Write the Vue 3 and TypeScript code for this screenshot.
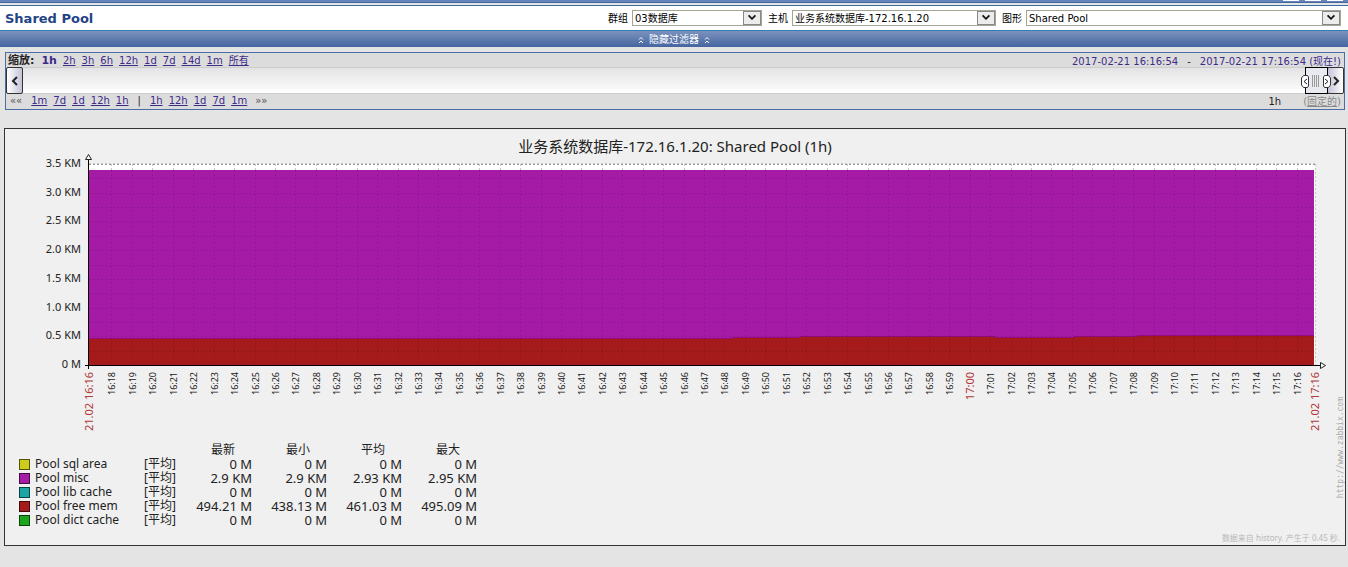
<script setup lang="ts">
interface LegendRow {
  name: string
  color: string
  values: string[]
}

const zooms: string[] = ['2h', '3h', '6h', '12h', '1d', '7d', '14d', '1m', '所有']
const back: string[] = ['1m', '7d', '1d', '12h', '1h']
const forward: string[] = ['1h', '12h', '1d', '7d', '1m']
const headers: string[] = ['最新', '最小', '平均', '最大']
const legend: LegendRow[] = [
  { name: 'Pool sql area', color: '#cccc1a', values: ['0 M', '0 M', '0 M', '0 M'] },
  { name: 'Pool misc', color: '#a51ba5', values: ['2.9 KM', '2.9 KM', '2.93 KM', '2.95 KM'] },
  { name: 'Pool lib cache', color: '#1ba5a5', values: ['0 M', '0 M', '0 M', '0 M'] },
  { name: 'Pool free mem', color: '#a51b1b', values: ['494.21 M', '438.13 M', '461.03 M', '495.09 M'] },
  { name: 'Pool dict cache', color: '#1ba51b', values: ['0 M', '0 M', '0 M', '0 M'] },
]

const left = 89
const right = 1315
const bottom = 365
const top = 164
const minute = (right - left) / 60

const ticks = Array.from({ length: 59 }, (_, i) => {
  const m = 18 + i
  const hour = 16 + Math.floor(m / 60)
  return {
    x: Math.round(left + (m - 16.9) * minute),
    label: `${hour}:${String(m % 60).padStart(2, '0')}`,
    major: m % 60 === 0,
  }
})
const rows = Array.from({ length: 14 }, (_, i) => Math.round(bottom - ((i + 1) * (bottom - top)) / 14))
const scale = Array.from({ length: 8 }, (_, i) => ({
  y: Math.round(bottom - (i * (bottom - top)) / 7) + 3,
  label: i === 0 ? '0 M' : `${(i / 2).toFixed(1)} KM`,
}))
</script>

<template>
  <main class="page">
    <div class="topbar"><i></i><i></i><i></i></div>
    <header class="head">
      <h1>Shared Pool</h1>
      <form class="filters">
        <label for="group">群组</label>
        <span class="pick group"><select id="group"><option>03数据库</option></select><svg viewBox="0 0 18 14"><path d="M5 4l4 4 4-4" /></svg></span>
        <label for="host">主机</label>
        <span class="pick host"><select id="host"><option>业务系统数据库-172.16.1.20</option></select><svg viewBox="0 0 18 14"><path d="M5 4l4 4 4-4" /></svg></span>
        <label for="graph">图形</label>
        <span class="pick graph"><select id="graph"><option>Shared Pool</option></select><svg viewBox="0 0 18 14"><path d="M5 4l4 4 4-4" /></svg></span>
      </form>
    </header>
    <button class="toggle" type="button">
      <svg viewBox="0 0 6 8"><path d="M1 3.5l2-2 2 2M1 7l2-2 2 2" /></svg>
      <span>隐藏过滤器</span>
      <svg viewBox="0 0 6 8"><path d="M1 3.5l2-2 2 2M1 7l2-2 2 2" /></svg>
    </button>

    <section class="timeline">
      <div class="line upper">
        <div class="links">
          <b>缩放:</b>
          <a class="current" href="#">1h</a>
          <a v-for="z in zooms" :key="z" href="#">{{ z }}</a>
        </div>
        <div class="range">
          <a href="#">2017-02-21 16:16:54</a><span>-</span><a href="#">2017-02-21 17:16:54 (现在!)</a>
        </div>
      </div>
      <div class="track">
        <button class="arrow prev" type="button" aria-label="Back"><svg viewBox="0 0 8 10"><path d="M6 1L2 5l4 4" /></svg></button>
        <button class="arrow next" type="button" aria-label="Forward"><svg viewBox="0 0 8 10"><path d="M2 1l4 4-4 4" /></svg></button>
        <svg class="handle" viewBox="0 0 32 27">
          <rect class="grip" x="5.500" y="0.500" width="22" height="26" />
          <path class="ribs" d="M12.500 8v12M14.500 8v12M16.500 8v12M18.500 8v12" />
          <path class="knob" d="M3.500 8.500h4l1 1.500v9l-1 1.500h-4l-2-2.500v-7zM24.500 8.500h4l2 2.500v7l-2 2.500h-4l-1-1.500v-9z" />
          <path class="sign" d="M7 12l-3 2.500 3 2.500M25 12l3 2.500-3 2.500" />
        </svg>
      </div>
      <div class="line lower">
        <div class="links">
          <span class="jump">««</span>
          <a v-for="b in back" :key="b" href="#">{{ b }}</a>
          <span class="bar">|</span>
          <a v-for="f in forward" :key="f" href="#">{{ f }}</a>
          <span class="jump end">»»</span>
        </div>
        <div class="fixed"><span>1h</span><span class="mode">(<a href="#">固定的</a>)</span></div>
      </div>
    </section>

    <section class="chart">
      <h2>业务系统数据库-172.16.1.20: Shared Pool (1h)</h2>
      <svg class="plot" viewBox="5 153 1340 282" role="img" aria-label="Shared Pool">
        <rect x="89" y="164" width="1226" height="201" fill="#fff" />
        <g class="grid">
          <path v-for="t in ticks" :key="t.x" :d="`M${t.x + 0.5} 164V170`" />
          <path d="M89 163.500H1315M1315.500 164V365" />
          <path class="strong" d="M89 164.500H1315" />
        </g>
        <path fill="#a51ba5" d="M89 170H1314V336H89z" />
        <path fill="#a51b1b" d="M89 339H733V338H800V337H995V338H1074V337H1137V336H1314V365H89z" />
        <path fill="#a51ba5" d="M89 335H1137V336H1074V337H995V336H800V337H733V338H89z" />
        <path fill="none" stroke="#960a82" d="M89 338.500H733V337.500H800V336.500H995V337.500H1074V336.500H1137V335.500H1314" />
        <g class="shade">
          <path v-for="t in ticks" :key="t.x" :d="`M${t.x + 0.5} 170V365`" />
          <path v-for="y in rows.slice(0, 13)" :key="y" :d="`M89 ${y + 0.5}H1315`" />
        </g>
        <path class="axis" d="M88.500 159V369M85 365.500H1320" />
        <path class="tip" d="M85.500 159.500L88.500 154.500L91.500 159.500zM1320.500 362.500L1325.500 365.500L1320.500 368.500z" />
        <g class="scale">
          <text v-for="s in scale" :key="s.label" x="81" :y="s.y">{{ s.label }}</text>
        </g>
        <g class="times">
          <text v-for="t in ticks" :key="t.x" :class="{ major: t.major }" :transform="`translate(${t.x + 4} 372) rotate(-90)`">{{ t.label }}</text>
          <text class="major" transform="translate(93 372) rotate(-90)">21.02 16:16</text>
          <text class="major" transform="translate(1319 372) rotate(-90)">21.02 17:16</text>
        </g>
      </svg>
      <table class="legend">
        <thead>
          <tr><td></td><td></td><th v-for="h in headers" :key="h">{{ h }}</th></tr>
        </thead>
        <tbody>
          <tr v-for="r in legend" :key="r.name">
            <td class="name"><div><i :style="{ background: r.color }"></i>{{ r.name }}</div></td>
            <td class="kind">[平均]</td>
            <td v-for="(v, i) in r.values" :key="i" class="value">{{ v }}</td>
          </tr>
        </tbody>
      </table>
      <p class="source">数据来自 history. 产生于 0.45 秒.</p>
      <span class="credit">http://www.zabbix.com</span>
    </section>
  </main>
</template>

<style>
body {
  margin: 0;
  background: #e4e4e4;
}
</style>

<style scoped>
.page {
  font: 10px/14px "DejaVu Sans", "Noto Sans CJK SC", sans-serif;
  color: #222;
}
.topbar {
  display: flex;
  justify-content: flex-end;
  gap: 6px;
  height: 2px;
  padding-right: 5px;
  background: #6585b8;
  border-bottom: 1px solid #4468a0;
}
.topbar i {
  width: 16px;
  height: 1px;
  background: #fff;
}
.head {
  display: flex;
  align-items: center;
  justify-content: space-between;
  height: 24px;
  margin-top: 2px;
  padding: 0 7px 0 5px;
  background: #fff;
  border-top: 1px solid #3a6ea5;
  border-bottom: 1px solid #2f7fb5;
}
h1 {
  margin: 0;
  padding-top: 2px;
  font-size: 13px;
  color: #1f4486;
}
.filters {
  display: flex;
  align-items: center;
  color: #000;
}
.filters label {
  margin: 0 4px 0 6px;
  padding-top: 2px;
}
.pick {
  position: relative;
  height: 16px;
}
.group { width: 130px; }
.host { width: 204px; }
.graph { width: 315px; }
.pick select {
  appearance: none;
  box-sizing: border-box;
  width: 100%;
  height: 16px;
  padding: 1px 20px 0 2px;
  border: 1px solid #a5a593;
  border-radius: 0;
  background: #fff;
  color: #000;
  font: inherit;
  display: block;
}
.pick svg {
  position: absolute;
  top: 1px;
  right: 1px;
  width: 18px;
  height: 14px;
  box-sizing: border-box;
  border: 1px solid #888;
  background: #ececec;
  pointer-events: none;
}
.pick path {
  fill: none;
  stroke: #111;
  stroke-width: 2;
}
.toggle {
  display: flex;
  align-items: center;
  justify-content: center;
  gap: 5px;
  width: 100%;
  height: 16px;
  padding: 2px 0 0;
  border: 0;
  background: linear-gradient(#7b92bd, #4565a0);
  color: #fff;
  font: inherit;
}
.toggle svg {
  width: 6px;
  height: 8px;
}
.toggle path {
  fill: none;
  stroke: #fff;
}
.timeline {
  margin: 5px 3px 0 5px;
  border: 1px solid #4a6da7;
  background: #dcdcdc;
}
.line {
  display: flex;
  justify-content: space-between;
  height: 14px;
  padding: 0 3px 0 2px;
}
.upper .links {
  padding-top: 1px;
}
.links {
  display: flex;
  gap: 6px;
}
a {
  color: #3d2b8a;
  text-underline-offset: 1px;
}
.links b {
  font-size: 11px;
  margin-right: 1px;
}
.links .current {
  font-size: 11px;
  font-weight: bold;
  text-decoration: none;
}
.range {
  display: flex;
  gap: 9px;
  padding-top: 2px;
}
.range a {
  text-decoration: none;
}
.track {
  position: relative;
  display: flex;
  justify-content: space-between;
  height: 27px;
  background: linear-gradient(#e2e2e4, #fff);
  box-shadow: inset 0 1px #ccc, inset 0 -1px #ccc;
}
.arrow {
  display: flex;
  align-items: center;
  justify-content: center;
  width: 17px;
  height: 27px;
  padding: 0;
  border: 1px solid #333;
  border-radius: 2px;
  background: linear-gradient(90deg, #fff, #c3c3d6);
}
.next {
  background: linear-gradient(90deg, #c3c3d6, #fff);
}
.arrow svg {
  width: 8px;
  height: 10px;
}
.arrow path {
  fill: none;
  stroke: #222;
  stroke-width: 2;
}
.handle {
  position: absolute;
  right: 12px;
  top: 0;
  width: 32px;
  height: 27px;
}
.grip {
  fill: #e9e9f0;
  stroke: #000;
}
.ribs {
  fill: none;
  stroke: #999;
}
.knob {
  fill: #fff;
  stroke: #333;
}
.sign {
  fill: none;
  stroke: #222;
}
.lower {
  height: 15px;
  padding-left: 4px;
}
.lower .links {
  line-height: 13px;
}
.jump {
  color: #555;
  margin-right: 3px;
}
.end {
  margin-left: 2px;
}
.bar {
  margin: 0 3px;
}
.fixed {
  display: flex;
  gap: 22px;
  padding-top: 1px;
}
.mode,
.mode a {
  color: #888;
}
.chart {
  position: relative;
  margin: 18px 2px 0 4px;
  border: 1px solid #333;
  background: #f0f0f0;
  font-family: "Noto Sans", "Noto Sans CJK SC", sans-serif;
}
h2 {
  margin: 0;
  padding-top: 6px;
  height: 18px;
  font-size: 15px;
  font-weight: normal;
  line-height: 22px;
  text-align: center;
}
.plot {
  display: block;
  width: 100%;
}
.grid path {
  fill: none;
  stroke: #c8c8c8;
  stroke-dasharray: 2 2;
}
.grid .strong {
  stroke: #999;
}
.shade path {
  fill: none;
  stroke: #000;
  stroke-opacity: 0.1;
  stroke-dasharray: 2 2;
}
.axis {
  fill: none;
  stroke: #000;
}
.tip {
  fill: #fff;
  stroke: #222;
}
text {
  fill: #222;
  text-anchor: end;
}
.scale text {
  font-size: 11px;
}
.times text {
  font-size: 9px;
}
.times .major {
  font-size: 11px;
  fill: #b03a3a;
}
.legend {
  margin: 8px 0 0 14px;
  border-collapse: collapse;
  font-size: 12px;
  line-height: 14px;
}
.legend td,
.legend th {
  height: 14px;
  padding: 0;
  font-weight: normal;
  white-space: nowrap;
}
.legend th {
  box-sizing: border-box;
  width: 75px;
  padding-right: 17px;
  text-align: right;
}
.legend .name {
  width: 125px;
}
.name div {
  display: flex;
  align-items: center;
  gap: 5px;
  height: 14px;
}
.name i {
  box-sizing: border-box;
  width: 11px;
  height: 11px;
  border: 1px solid rgba(0, 0, 0, 0.6);
}
.legend .kind {
  width: 33px;
}
.legend .value {
  font-size: 13px;
  line-height: 13px;
  text-align: right;
}
.source {
  margin: 4px 5px 1px;
  font-size: 8px;
  line-height: 13px;
  text-align: right;
  color: #b8b8b8;
}
.credit {
  position: absolute;
  right: 0;
  bottom: 47px;
  writing-mode: vertical-rl;
  transform: rotate(180deg);
  font: 8px/9px "DejaVu Sans Mono", monospace;
  color: #aaa;
}
</style>
